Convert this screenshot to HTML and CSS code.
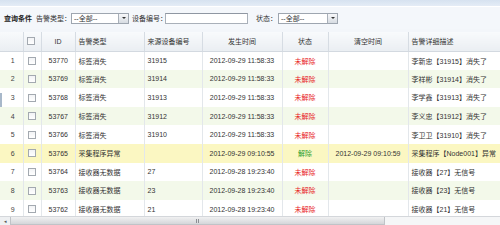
FILE: index.html
```html
<!DOCTYPE html>
<html lang="zh-CN">
<head>
<meta charset="utf-8">
<title>告警列表</title>
<link rel="stylesheet" href="styles.css">
</head>
<body>
<div class="topbar"></div>
<div class="query">
  <span class="q-title">查询条件</span>
  <span class="q-label">告警类型：</span>
  <span class="select sel-type"><span class="sel-text">--全部--</span><span class="sel-btn"><span class="arrow"></span></span></span>
  <span class="q-label lbl-dev">设备编号：</span>
  <span class="input"></span>
  <span class="q-label lbl-state">状态：</span>
  <span class="select sel-state"><span class="sel-text">--全部--</span><span class="sel-btn"><span class="arrow"></span></span></span>
</div>
<div class="grid-wrap">
  <span class="handle"></span>
  <table class="grid">
    <colgroup>
      <col class="c-no"><col class="c-ck"><col class="c-id"><col class="c-type"><col class="c-src"><col class="c-time"><col class="c-state"><col class="c-clear"><col class="c-desc">
    </colgroup>
    <thead>
      <tr>
        <th></th><th><span class="ck"></span></th><th class="center">ID</th><th>告警类型</th><th>来源设备编号</th><th class="center">发生时间</th><th class="center">状态</th><th class="center">清空时间</th><th>告警详细描述</th>
      </tr>
    </thead>
    <tbody>
      <tr><td class="no">1</td><td class="center"><span class="ck"></span></td><td class="id">53770</td><td>标签消失</td><td>31915</td><td class="center">2012-09-29 11:58:33</td><td class="center red">未解除</td><td></td><td>李新忠【31915】消失了</td></tr>
      <tr class="alt"><td class="no">2</td><td class="center"><span class="ck"></span></td><td class="id">53769</td><td>标签消失</td><td>31914</td><td class="center">2012-09-29 11:58:33</td><td class="center red">未解除</td><td></td><td>李祥彬【31914】消失了</td></tr>
      <tr><td class="no">3</td><td class="center"><span class="ck"></span></td><td class="id">53768</td><td>标签消失</td><td>31913</td><td class="center">2012-09-29 11:58:33</td><td class="center red">未解除</td><td></td><td>李学鑫【31913】消失了</td></tr>
      <tr class="alt"><td class="no">4</td><td class="center"><span class="ck"></span></td><td class="id">53767</td><td>标签消失</td><td>31912</td><td class="center">2012-09-29 11:58:33</td><td class="center red">未解除</td><td></td><td>李义忠【31912】消失了</td></tr>
      <tr><td class="no">5</td><td class="center"><span class="ck"></span></td><td class="id">53766</td><td>标签消失</td><td>31910</td><td class="center">2012-09-29 11:58:33</td><td class="center red">未解除</td><td></td><td>李卫卫【31910】消失了</td></tr>
      <tr class="hl"><td class="no">6</td><td class="center"><span class="ck"></span></td><td class="id">53765</td><td>采集程序异常</td><td></td><td class="center">2012-09-29 09:10:55</td><td class="center green">解除</td><td class="center">2012-09-29 09:10:59</td><td>采集程序【Node001】异常</td></tr>
      <tr><td class="no">7</td><td class="center"><span class="ck"></span></td><td class="id">53764</td><td>接收器无数据</td><td>27</td><td class="center">2012-09-28 19:23:40</td><td class="center red">未解除</td><td></td><td>接收器【27】无信号</td></tr>
      <tr class="alt"><td class="no">8</td><td class="center"><span class="ck"></span></td><td class="id">53763</td><td>接收器无数据</td><td>23</td><td class="center">2012-09-28 19:23:40</td><td class="center red">未解除</td><td></td><td>接收器【23】无信号</td></tr>
      <tr><td class="no">9</td><td class="center"><span class="ck"></span></td><td class="id">53762</td><td>接收器无数据</td><td>21</td><td class="center">2012-09-28 19:23:40</td><td class="center red">未解除</td><td></td><td>接收器【21】无信号</td></tr>
    </tbody>
  </table>
</div>
<div class="hscroll">
  <span class="sb-arrow">&#9666;</span>
  <span class="sb-thumb"><span class="grip"></span></span>
  <span class="sb-track"></span>
</div>
</body>
</html>
```
FILE: styles.css
```css
html, body {
  margin: 0;
  padding: 0;
}
body {
  width: 500px;
  height: 225px;
  overflow: hidden;
  background: #f3f6fa;
  font-family: "Liberation Sans", "Noto Sans CJK SC", sans-serif;
  font-size: 7px;
  color: #333;
}
.topbar {
  height: 6px;
  background: linear-gradient(#d6e2f0, #e4ecf6);
  border-bottom: 1px solid #ffffff;
}
.query {
  height: 22px;
  display: flex;
  align-items: center;
  padding-left: 4px;
  background: #f4f7fb;
}
.q-title {
  font-weight: bold;
  color: #222;
  margin-right: 4px;
}
.q-label {
  color: #333;
}
.lbl-dev { margin-left: 3px; }
.lbl-state { margin-left: 8px; }
.select {
  display: flex;
  height: 11px;
  border: 1px solid #9ea6b0;
  background: #fff;
  box-sizing: border-box;
}
.sel-type { width: 58px; }
.sel-state { width: 60px; margin-left: 1px; }
.sel-text {
  flex: 1;
  padding-left: 2px;
  line-height: 9px;
  color: #333;
}
.sel-btn {
  width: 9px;
  border-left: 1px solid #a9b0b9;
  background: linear-gradient(#f7f8fa, #d7dce2);
  display: flex;
  align-items: center;
  justify-content: center;
}
.arrow {
  width: 0;
  height: 0;
  border-left: 2px solid transparent;
  border-right: 2px solid transparent;
  border-top: 2px solid #333;
}
.input {
  width: 83px;
  height: 11px;
  box-sizing: border-box;
  border: 1px solid #a9b0b9;
  border-top-color: #8f97a2;
  background: #fff;
  margin-left: -2px;
}
.grid-wrap {
  margin-top: 3px;
  height: 184px;
  overflow: hidden;
  position: relative;
  background: #fff;
}
.handle {
  position: absolute;
  left: 0;
  top: 61px;
  width: 2px;
  height: 14px;
  background: #a8b8ca;
  z-index: 2;
}
.grid {
  border-collapse: collapse;
  table-layout: fixed;
  width: 548px;
}
.c-no { width: 23px; }
.c-ck { width: 18px; }
.c-id { width: 34px; }
.c-type { width: 69px; }
.c-src { width: 58px; }
.c-time { width: 80px; }
.c-state { width: 46px; }
.c-clear { width: 80px; }
.c-desc { width: 140px; }
th {
  height: 19px;
  padding: 0 0 0 3px;
  font-weight: normal;
  text-align: left;
  color: #333;
  background: linear-gradient(#f8fafc, #eaeef2);
  border-right: 1px solid #d6dce3;
  border-bottom: 1px solid #d3d9e0;
  white-space: nowrap;
  overflow: hidden;
  box-sizing: border-box;
}
td {
  height: 18.6px;
  padding: 0 0 0 3px;
  border-right: 1px solid #e3e7eb;
  white-space: nowrap;
  overflow: hidden;
  box-sizing: border-box;
  color: #333;
}
th.center, td.center {
  text-align: center;
  padding-left: 0;
}
td.no {
  text-align: center;
  padding-left: 3px;
  color: #444;
}
td.id {
  padding-left: 7px;
}
tr.alt td { background: #f3f9ea; }
tr.hl td { background: #fbf7c2; }
.red { color: #e8231d; }
.green { color: #2f9d2f; }
.ck {
  display: inline-block;
  width: 6px;
  height: 6px;
  border: 1px solid #a3a9b0;
  background: linear-gradient(#f2f3f5, #ffffff);
  vertical-align: middle;
}
.hscroll {
  height: 9px;
  display: flex;
  background: #eef0f2;
  border-top: 1px solid #d4d7db;
  box-sizing: border-box;
}
.sb-arrow {
  width: 10px;
  font-size: 5px;
  line-height: 8px;
  text-align: center;
  color: #555;
}
.sb-thumb {
  width: 375px;
  background: linear-gradient(#f1f1f2, #d4d6d9);
  border: 1px solid #c0c3c7;
  border-top: none;
  box-sizing: border-box;
  display: flex;
  align-items: center;
  justify-content: center;
}
.grip {
  width: 4px;
  height: 4px;
  background: repeating-linear-gradient(90deg, #8c8f94 0 1px, transparent 1px 2px);
}
.sb-track {
  flex: 1;
  background: #f5f6f7;
}
```
